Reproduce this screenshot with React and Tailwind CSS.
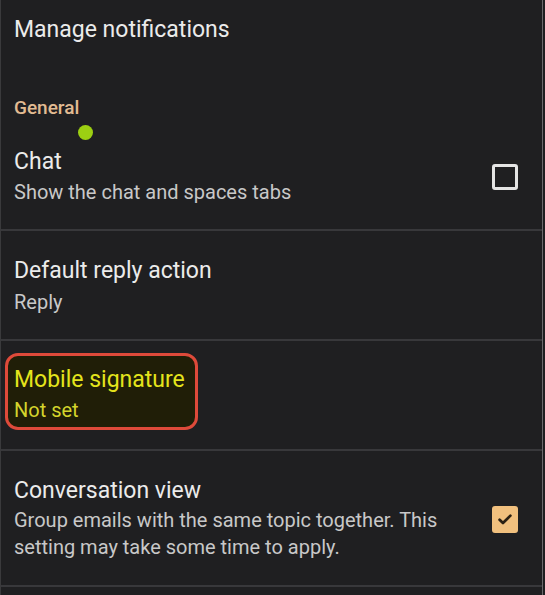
import React from "react";

function Check() {
  return (
    <div className="w-[26px] h-[27px] rounded-[3px] bg-[#f1c07e] flex items-center justify-center">
      <svg width="18" height="18" viewBox="0 0 16 16" fill="none">
        <path d="M3.2 8.6l3 3L12.8 5" stroke="#2b2013" strokeWidth="2.4" strokeLinecap="round" strokeLinejoin="round" />
      </svg>
    </div>
  );
}

function Empty() {
  return <div className="w-[26px] h-[26px] rounded-[3px] border-[3px] border-[#e4e4e4]" />;
}

export default function App() {
  return (
    <div
      className="relative w-[545px] h-[595px] overflow-hidden bg-[#1f1f21]"
      style={{ fontFamily: "Roboto, 'Noto Sans', sans-serif" }}
    >
      <div className="w-[543px] h-full border-l border-r border-l-[#3a3a3c] border-r-[#6a6a6c] flex flex-col">
        {/* Header */}
        <div className="px-[13px] pt-[16px]">
          <div className="text-[23px] leading-[28px] text-[#ebebeb]">Manage notifications</div>
          <div className="mt-[52px] text-[19px] leading-[24px] font-medium text-[#e2bb92]">General</div>
        </div>

        {/* Chat */}
        <div className="pl-[13px] pr-[15px] pt-[28px] pb-[23px] flex items-center justify-between">
          <div>
            <div className="text-[23px] leading-[28px] text-[#ebebeb]">Chat</div>
            <div className="mt-[3px] text-[20px] leading-[27px] text-[#c8c8c8]">Show the chat and spaces tabs</div>
          </div>
          <div className="mr-[9px]">
            <Empty />
          </div>
        </div>

        {/* Default reply action */}
        <div className="border-t-2 border-[#38383b] px-[13px] pt-[26px] pb-[23px]">
          <div className="text-[23px] leading-[28px] text-[#ebebeb]">Default reply action</div>
          <div className="mt-[4px] text-[20px] leading-[27px] text-[#c8c8c8]">Reply</div>
        </div>

        {/* Mobile signature */}
        <div className="border-t-2 border-[#38383b] px-[13px] pt-[12px] pb-[19px]">
          <div className="-ml-[9px] w-[193px] border-[3px] border-[#de4a3a] rounded-[13px] bg-[#201e07] pl-[6px] pt-[10px] pb-[3px]">
            <div className="text-[23px] leading-[28px] text-[#e4e41c] whitespace-nowrap">Mobile signature</div>
            <div className="mt-[3px] text-[20px] leading-[27px] text-[#d4d42c]">Not set</div>
          </div>
        </div>

        {/* Conversation view */}
        <div className="border-t-2 border-[#38383b] pl-[13px] pr-[15px] pt-[26px] pb-[24px] flex items-center justify-between">
          <div>
            <div className="text-[23px] leading-[28px] text-[#ebebeb]">Conversation view</div>
            <div className="mt-[2px] text-[20px] leading-[27px] text-[#c8c8c8]">
              Group emails with the same topic together. This
              <br />
              setting may take some time to apply.
            </div>
          </div>
          <div className="mr-[9px]">
            <Check />
          </div>
        </div>

        <div className="border-t-2 border-[#38383b] flex-1" />
      </div>

      {/* cursor dot overlay */}
      <div className="absolute left-[78px] top-[125px] w-[15px] h-[15px] rounded-full bg-[#9ccf12]" />
    </div>
  );
}
